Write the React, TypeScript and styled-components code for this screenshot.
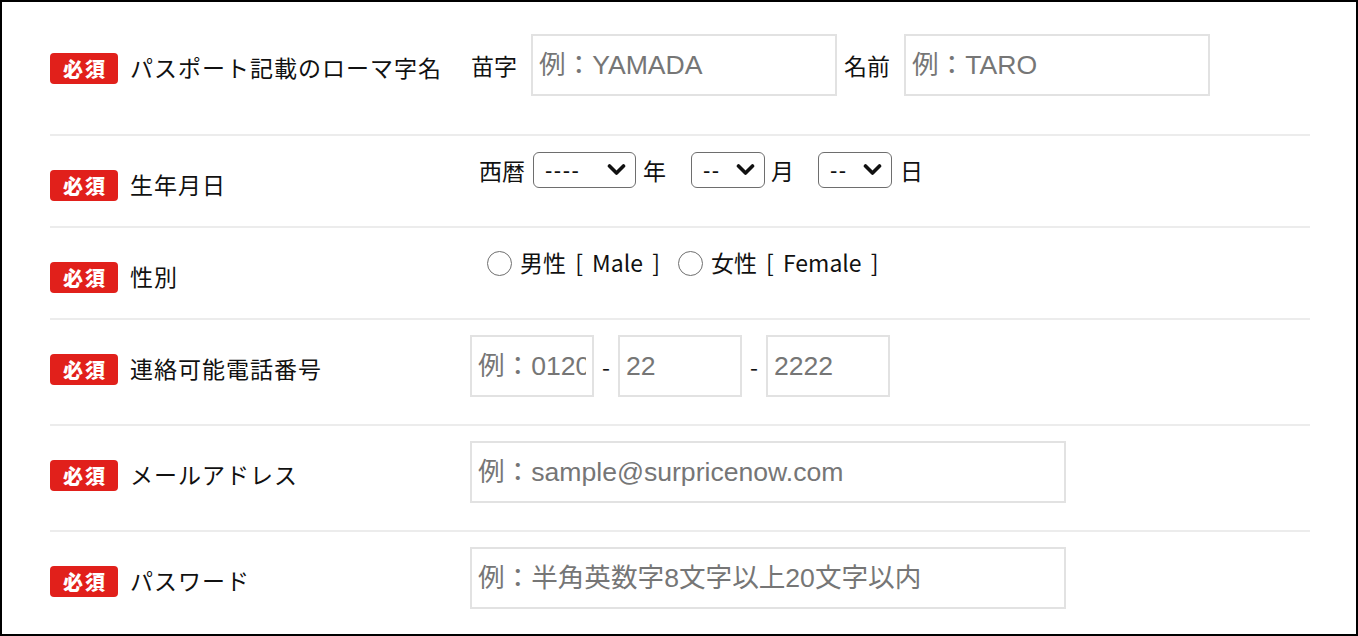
import React from 'react';
import styled, { createGlobalStyle } from 'styled-components';

const GlobalStyle = createGlobalStyle`
  html, body {
    margin: 0;
    padding: 0;
    background: #fff;
  }
  body {
    font-family: 'Noto Sans CJK JP', 'Noto Sans', sans-serif;
    color: #111;
  }
`;

const Frame = styled.div`
  width: 1358px;
  height: 636px;
  box-sizing: border-box;
  border: 2px solid #000;
  padding: 17px 46px 0 48px;
  overflow: hidden;
  background: #fff;
`;

const Row = styled.div`
  display: flex;
  border-bottom: 2px solid #ececec;
`;

const LabelCol = styled.div`
  width: 420px;
  flex: none;
  align-self: flex-start;
  box-sizing: border-box;
  padding: 34px 0 25px;
  display: flex;
  align-items: center;
  gap: 12px;
`;

const Badge = styled.span`
  display: inline-flex;
  align-items: center;
  justify-content: center;
  width: 68px;
  height: 31px;
  border-radius: 4px;
  background: #e1201b;
  color: #fff;
  font-size: 20px;
  font-weight: 900;
  letter-spacing: 2px;
  text-indent: 2px;
  line-height: 1;
`;

const LabelText = styled.span`
  font-size: 23px;
  letter-spacing: 1px;
  line-height: 31px;
  color: #111;
  white-space: nowrap;
  margin-top: -2px;
`;

const FieldCol = styled.div<{ $pb?: number; $pl?: number }>`
  flex: 1;
  display: flex;
  align-items: center;
  align-self: flex-start;
  min-height: 38px;
  padding-top: 15px;
  padding-bottom: ${(p) => p.$pb ?? 0}px;
  padding-left: ${(p) => p.$pl ?? 0}px;
`;

const FieldLabel = styled.span<{ $ml?: number; $mr?: number }>`
  font-size: 23px;
  color: #111;
  white-space: nowrap;
  margin-left: ${(p) => p.$ml ?? 0}px;
  margin-right: ${(p) => p.$mr ?? 0}px;
`;

const TextInput = styled.input<{ $w: number; $mr?: number }>`
  box-sizing: border-box;
  width: ${(p) => p.$w}px;
  height: 62px;
  margin: 0 ${(p) => p.$mr ?? 0}px 0 0;
  padding: 0 6px;
  border: 2px solid #e2e2e2;
  border-radius: 0;
  outline: none;
  background: #fff;
  font-family: 'Liberation Sans', 'Noto Sans CJK JP', sans-serif;
  font-size: 26.6px;
  color: #333;

  &::placeholder {
    color: #767676;
  }
`;

const Dash = styled.span`
  font-size: 23px;
  margin: 0 8px;
  color: #111;
`;

const SelectWrap = styled.span<{ $w: number }>`
  position: relative;
  display: inline-block;
  width: ${(p) => p.$w}px;
  height: 36px;
`;

const Select = styled.select`
  appearance: none;
  -webkit-appearance: none;
  box-sizing: border-box;
  width: 100%;
  height: 100%;
  padding: 0 0 0 11px;
  border: 1.5px solid #6e6e6e;
  border-radius: 6px;
  background: #fff;
  font-family: 'Liberation Sans', sans-serif;
  font-size: 22px;
  letter-spacing: 1.5px;
  color: #111;
  outline: none;
`;

const Chevron = styled.svg`
  position: absolute;
  right: 10px;
  top: 50%;
  transform: translateY(-50%);
  pointer-events: none;
`;

const RadioLabel = styled.label<{ $mr?: number }>`
  display: inline-flex;
  align-items: center;
  font-size: 23px;
  word-spacing: 4px;
  color: #111;
  margin-right: ${(p) => p.$mr ?? 0}px;
  white-space: pre;
`;

const Radio = styled.input`
  appearance: none;
  -webkit-appearance: none;
  box-sizing: border-box;
  width: 25px;
  height: 25px;
  margin: 2px 8px 0 0;
  border: 1.5px solid #6f6f6f;
  border-radius: 50%;
  background: #fff;
`;

const DateSelect = ({ w, options }: { w: number; options: string[] }) => (
  <SelectWrap $w={w}>
    <Select defaultValue={options[0]}>
      {options.map((o) => (
        <option key={o}>{o}</option>
      ))}
    </Select>
    <Chevron width="19" height="13" viewBox="0 0 19 13">
      <path d="M2.5 2.5 L9.5 9.5 L16.5 2.5" fill="none" stroke="#111" strokeWidth="3.6" strokeLinecap="round" strokeLinejoin="round" />
    </Chevron>
  </SelectWrap>
);

const Label = ({ text }: { text: string }) => (
  <LabelCol>
    <Badge>必須</Badge>
    <LabelText>{text}</LabelText>
  </LabelCol>
);

const years = ['----', ...Array.from({ length: 80 }, (_, i) => String(2005 - i))];
const months = ['--', ...Array.from({ length: 12 }, (_, i) => String(i + 1))];
const days = ['--', ...Array.from({ length: 31 }, (_, i) => String(i + 1))];

export default function App() {
  return (
    <>
      <GlobalStyle />
      <Frame>
        <Row>
          <Label text="パスポート記載のローマ字名" />
          <FieldCol $pb={38} $pl={1}>
            <FieldLabel $mr={14}>苗字</FieldLabel>
            <TextInput $w={306} $mr={7} placeholder="例：YAMADA" />
            <FieldLabel $mr={14}>名前</FieldLabel>
            <TextInput $w={306} placeholder="例：TARO" />
          </FieldCol>
        </Row>

        <Row>
          <Label text="生年月日" />
          <FieldCol $pl={9}>
            <FieldLabel $mr={8}>西暦</FieldLabel>
            <DateSelect w={103} options={years} />
            <FieldLabel $ml={7} $mr={25}>年</FieldLabel>
            <DateSelect w={74} options={months} />
            <FieldLabel $ml={6} $mr={24}>月</FieldLabel>
            <DateSelect w={74} options={days} />
            <FieldLabel $ml={8}>日</FieldLabel>
          </FieldCol>
        </Row>

        <Row>
          <Label text="性別" />
          <FieldCol $pl={17}>
            <RadioLabel $mr={18}>
              <Radio type="radio" name="gender" value="male" />
              男性 [ Male ]
            </RadioLabel>
            <RadioLabel>
              <Radio type="radio" name="gender" value="female" />
              女性 [ Female ]
            </RadioLabel>
          </FieldCol>
        </Row>

        <Row>
          <Label text="連絡可能電話番号" />
          <FieldCol $pb={27}>
            <TextInput $w={124} placeholder="例：0120" />
            <Dash>-</Dash>
            <TextInput $w={124} placeholder="22" />
            <Dash>-</Dash>
            <TextInput $w={124} placeholder="2222" />
          </FieldCol>
        </Row>

        <Row>
          <Label text="メールアドレス" />
          <FieldCol $pb={27}>
            <TextInput $w={596} type="email" placeholder="例：sample@surpricenow.com" />
          </FieldCol>
        </Row>

        <Row>
          <Label text="パスワード" />
          <FieldCol $pb={27}>
            <TextInput $w={596} type="password" placeholder="例：半角英数字8文字以上20文字以内" />
          </FieldCol>
        </Row>
      </Frame>
    </>
  );
}
